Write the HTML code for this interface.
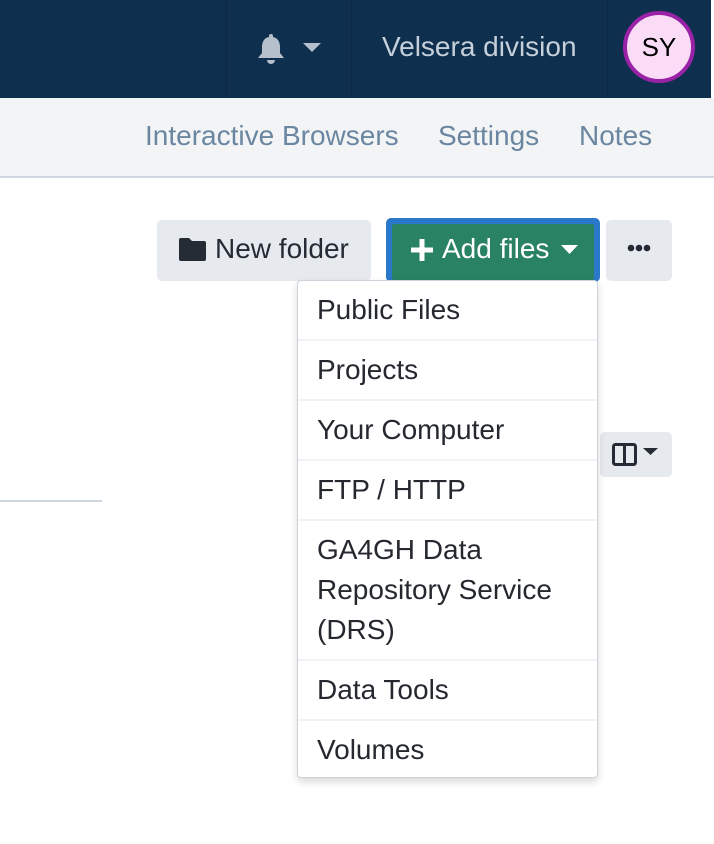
<!DOCTYPE html>
<html><head><style>
*{margin:0;padding:0;box-sizing:border-box}
body{width:714px;height:844px;overflow:hidden;background:#fff;font-family:"Liberation Sans",Arial,sans-serif;position:relative}
.abs{position:absolute}
.hdr{left:0;top:0;width:714px;height:98px;background:#0e2f4e}
.sep{top:0;width:1px;height:98px;background:#0b2844}
.nav{left:0;top:98px;width:714px;height:80px;background:#f3f4f6;border-bottom:2px solid #d0d6dd}
.navt{top:120px;font-size:28px;color:#6a86a0;white-space:nowrap}
.btn{background:#e6e9ee;border-radius:5px}
.dd{left:297px;top:280px;width:301px;height:498px;background:#fff;border:1px solid #cdd3db;border-radius:4px;box-shadow:0 4px 8px rgba(0,0,0,.15)}
.it{position:absolute;left:0;width:299px;padding-left:19px;font-size:28px;color:#25292f;line-height:40px;border-bottom:2px solid #f1f2f4;white-space:nowrap}
</style></head><body>
<div class="abs hdr"></div>
<div class="abs sep" style="left:226px"></div>
<div class="abs sep" style="left:351px"></div>
<div class="abs sep" style="left:607px"></div>
<div class="abs" style="left:711px;top:0;width:3px;height:844px;background:#fff"></div>
<svg class="abs" style="left:256px;top:33px" width="30" height="32" viewBox="0 0 30 32"><path d="M15 1 a2 2 0 0 1 2 2 v1 c5 1 7 5 7 10 v6 l4 5 H2 l4-5 v-6 c0-5 2-9 7-10 V3 a2 2 0 0 1 2-2z M11 27 h8 a4 4 0 0 1 -8 0z" fill="#b5c0cc"/></svg>
<svg class="abs" style="left:303px;top:43px" width="18" height="10"><path d="M0 0 H18 L9 9z" fill="#b5c0cc"/></svg>
<div class="abs" style="left:382px;top:31px;font-size:28px;color:#c5d0db;white-space:nowrap">Velsera division</div>
<div class="abs" style="left:623px;top:11px;width:72px;height:72px;border-radius:50%;background:#fadcf7;border:4px solid #9a22a6;font-size:26px;color:#000;text-align:center;line-height:64px">SY</div>
<div class="abs nav"></div>
<div class="abs navt" style="left:145px">Interactive Browsers</div>
<div class="abs navt" style="left:438px">Settings</div>
<div class="abs navt" style="left:579px">Notes</div>
<div class="abs btn" style="left:157px;top:220px;width:214px;height:61px"></div>
<svg class="abs" style="left:179px;top:238px" width="27" height="23" viewBox="0 0 27 23"><path d="M2 0 h8 l3 3 h12 a2 2 0 0 1 2 2 v16 a2 2 0 0 1 -2 2 H2 a2 2 0 0 1 -2 -2 V2 a2 2 0 0 1 2 -2z" fill="#252b35"/></svg>
<div class="abs" style="left:215px;top:233px;font-size:28px;color:#252b35;white-space:nowrap">New folder</div>
<div class="abs" style="left:386px;top:218px;width:214px;height:64px;background:#2a78c9;border-radius:5px"></div>
<div class="abs" style="left:392px;top:224px;width:202px;height:56px;background:#298264;border-radius:2px"></div>
<svg class="abs" style="left:411px;top:239px" width="22" height="22"><path d="M8.5 0h5v8.5H22v5h-8.5V22h-5v-8.5H0v-5h8.5z" fill="#fff"/></svg>
<div class="abs" style="left:442px;top:233px;font-size:28px;color:#fff;white-space:nowrap">Add files</div>
<svg class="abs" style="left:561px;top:245px" width="17" height="10"><path d="M0 0H17L8.5 9z" fill="#fff"/></svg>
<div class="abs btn" style="left:606px;top:220px;width:66px;height:61px"></div>
<svg class="abs" style="left:627px;top:244px" width="24" height="10"><circle cx="4" cy="4" r="3.3" fill="#252b35"/><circle cx="12" cy="4" r="3.3" fill="#252b35"/><circle cx="20" cy="4" r="3.3" fill="#252b35"/></svg>
<div class="abs" style="left:0;top:500px;width:102px;height:2px;background:#cfd7de"></div>
<div class="abs btn" style="left:600px;top:432px;width:72px;height:45px"></div>
<svg class="abs" style="left:612px;top:443px" width="50" height="24"><rect x="1.5" y="1.5" width="22" height="20" rx="2" fill="none" stroke="#252b35" stroke-width="3"/><path d="M12.5 1.5v20" stroke="#252b35" stroke-width="3"/><path d="M31 5H46L38.5 12z" fill="#252b35"/></svg>
<div class="abs dd">
<div class="it" style="top:0;height:60px;padding-top:9px">Public Files</div>
<div class="it" style="top:60px;height:60px;padding-top:9px">Projects</div>
<div class="it" style="top:120px;height:60px;padding-top:9px">Your Computer</div>
<div class="it" style="top:180px;height:60px;padding-top:9px">FTP / HTTP</div>
<div class="it" style="top:240px;height:140px;padding-top:9px">GA4GH Data<br>Repository Service<br>(DRS)</div>
<div class="it" style="top:380px;height:60px;padding-top:9px">Data Tools</div>
<div class="it" style="top:440px;height:58px;padding-top:9px;border:none">Volumes</div>
</div>
</body></html>
